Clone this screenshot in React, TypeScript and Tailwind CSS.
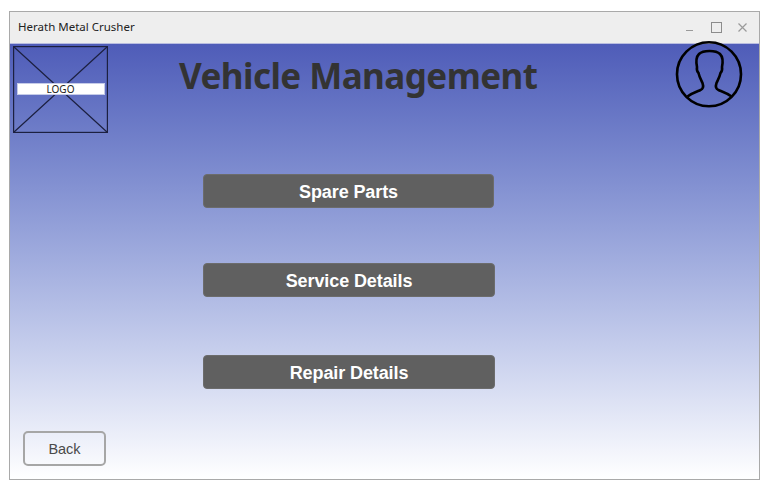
export default function App() {
  const buttons = [
    { label: "Spare Parts", cls: "w-[291px] mt-[41px]" },
    { label: "Service Details", cls: "w-[292px] mt-[55px]" },
    { label: "Repair Details", cls: "w-[292px] mt-[58px]" },
  ];
  return (
    <div className="w-[780px] h-[495px] bg-white pt-[11px] pl-[9px] font-['Liberation_Sans',sans-serif]">
      <div className="relative w-[751px] h-[469px] border border-[#a9a9a9] flex flex-col">
        <div className="h-[32px] shrink-0 bg-[#eeeeee] flex items-center justify-between pl-[8px] pr-[11px] border-b border-[#b9bde0]">
          <span className="mb-[2px] font-['Noto_Sans',sans-serif] text-[11.5px] text-[#222] leading-none">Herath Metal Crusher</span>
          <div className="flex items-center gap-[15px]">
            <svg width="11" height="11" viewBox="0 0 11 11"><path d="M1 8.5H8" stroke="#9a9a9a" strokeWidth="1" /></svg>
            <svg width="11" height="11" viewBox="0 0 11 11"><rect x="0.5" y="0.5" width="10" height="10" fill="none" stroke="#8c8c8c" /></svg>
            <svg width="11" height="11" viewBox="0 0 11 11"><path d="M1.5 1.5L9.5 9.5M9.5 1.5L1.5 9.5" stroke="#9a9a9a" strokeWidth="1.2" /></svg>
          </div>
        </div>
        <div className="flex-1 flex flex-col bg-gradient-to-b from-[#4f5cb8] to-white">
          <div className="flex items-start h-[89px] pt-[2px] pl-[3px]">
            <div className="relative w-[95px] h-[87px] shrink-0 flex items-center justify-center">
              <svg className="absolute inset-0" width="95" height="87" viewBox="0 0 95 87">
                <rect x="0.5" y="0.5" width="94" height="86" fill="none" stroke="#1c2040" strokeWidth="1.4" />
                <path d="M0.5 0.5L94.5 86.5M94.5 0.5L0.5 86.5" stroke="#1c2040" strokeWidth="1.2" />
              </svg>
              <div className="relative mt-[-1px] w-[88px] h-[12px] bg-white border border-[#c5cbe8] flex items-center justify-center text-[10px] font-['Noto_Sans',sans-serif] text-[#222] leading-none">LOGO</div>
            </div>
            <h1 className="ml-[71px] mt-[8px] font-['Noto_Sans',sans-serif] font-bold text-[35px] leading-[44px] tracking-[-0.55px] text-[#333333] whitespace-nowrap">Vehicle Management</h1>
          </div>
          <div className="flex flex-col pl-[193px]">
            {buttons.map((b) => (
              <div key={b.label} className={`${b.cls} h-[34px] pt-[2px] rounded-[4px] bg-[#606060] border border-[#6c6c6c] flex items-center justify-center text-white font-bold text-[18px] tracking-[-0.1px]`}>
                {b.label}
              </div>
            ))}
          </div>
          <div className="mt-[42px] ml-[13px] w-[83px] h-[35px] pt-[2px] rounded-[5px] border-2 border-[#a6a6a6] flex items-center justify-center text-[14.5px] text-[#4a4a4a]">Back</div>
        </div>
        <svg className="absolute left-[665px] top-[28px]" width="68" height="68" viewBox="0 0 68 68" fill="none" stroke="#000" strokeWidth="2.6">
          <circle cx="34" cy="34.2" r="32" />
          <path d="M12.5 56.5C17 53 22 51.5 25.5 50C28 49 28.5 46 27.5 43C26.5 40.5 24.5 37.5 23.5 33C22.5 32 21.5 30 22 27C21 22 21 17 24 14C28 10 41 10 45 14C48 17 48 22 47 27C47.5 30 46.5 32 45.5 33C44.5 37.5 42.5 40.5 41.5 43C40.5 46 41 49 43.5 50C47 51.5 52 53 56.5 56.5" />
        </svg>
      </div>
    </div>
  );
}
